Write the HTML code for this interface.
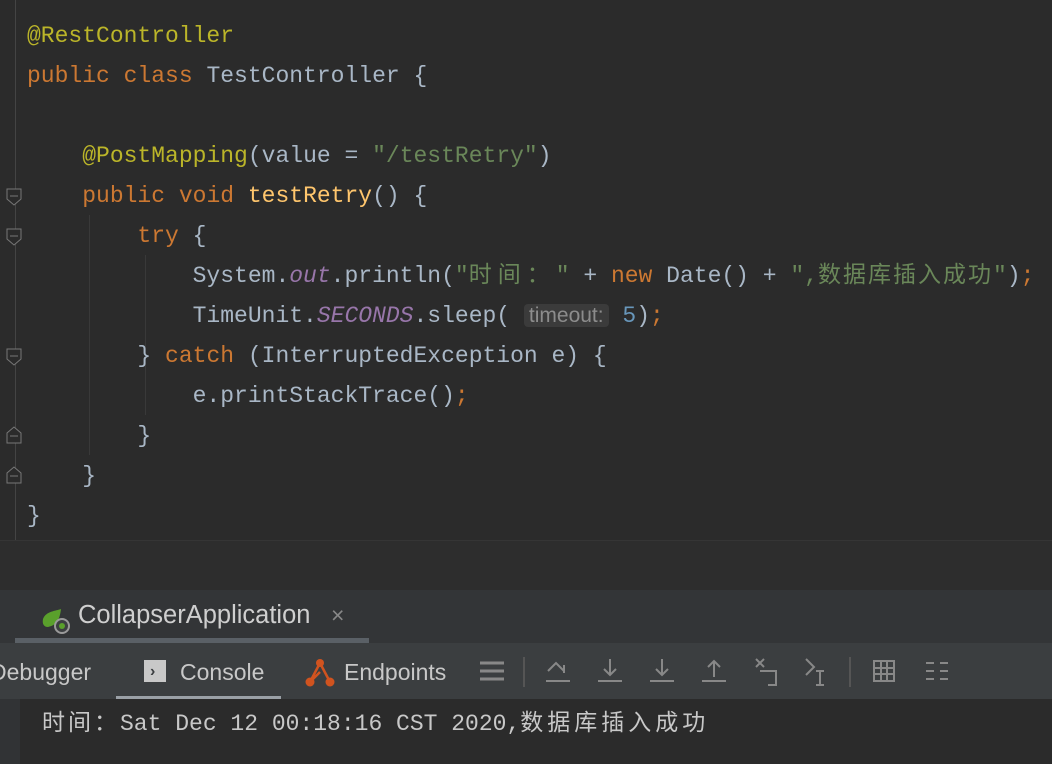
<!DOCTYPE html>
<html><head><meta charset="utf-8"><style>
body{margin:0;width:1052px;height:764px;background:#2b2b2b;overflow:hidden;position:relative;font-family:"Liberation Mono","Noto Sans CJK SC",monospace;}
.ed{position:absolute;left:0;top:0;width:1052px;height:540px;background:#2b2b2b;}
.gl{position:absolute;left:15px;top:0;width:1px;height:540px;background:#444;}
.l{position:absolute;left:27px;font-size:23px;white-space:pre;color:#a9b7c6;line-height:30px;}
.k{color:#cc7832}.a{color:#bbb529}.m{color:#ffc66d}.s{color:#6a8759}.i{color:#9876aa;font-style:italic}.n{color:#6897bb}
.hint{background:#3b3b3b;color:#8c8c8c;font-family:"Liberation Sans",sans-serif;font-size:21px;border-radius:4px;padding:0 5px;}
.ig{position:absolute;width:1px;background:#393939;}
.fold{position:absolute;left:6px;width:16px;height:18px;}
.mid{position:absolute;left:0;top:540px;width:1052px;height:50px;background:#2d2d2d;border-top:1px solid #353535}
.tabs{position:absolute;left:0;top:590px;width:1052px;height:53px;background:#333537;}
.tb{position:absolute;left:0;top:643px;width:1052px;height:56px;background:#3b3e40;}
.ui{font-family:"Liberation Sans",sans-serif;color:#c8c8c8;font-size:23px;position:absolute;white-space:pre}
.out{position:absolute;left:0;top:699px;width:1052px;height:65px;background:#2b2b2b;}
.c1{letter-spacing:6px}.c2{letter-spacing:2px}
</style></head><body>
<div class="ed">
<div class="gl"></div>
<div class="ig" style="left:89px;top:215px;height:240px"></div>
<div class="ig" style="left:145px;top:255px;height:160px"></div>
<svg class="fold" style="top:188px" viewBox="0 0 16 18"><path d="M1 1H15V11L8 17L1 11Z" fill="#2b2b2b" stroke="#777"/><path d="M4 8H12" stroke="#777"/></svg>
<svg class="fold" style="top:228px" viewBox="0 0 16 18"><path d="M1 1H15V11L8 17L1 11Z" fill="#2b2b2b" stroke="#777"/><path d="M4 8H12" stroke="#777"/></svg>
<svg class="fold" style="top:348px" viewBox="0 0 16 18"><path d="M1 1H15V11L8 17L1 11Z" fill="#2b2b2b" stroke="#777"/><path d="M4 8H12" stroke="#777"/></svg>
<svg class="fold" style="top:426px" viewBox="0 0 16 18"><path d="M1 17H15V7L8 1L1 7Z" fill="#2b2b2b" stroke="#777"/><path d="M4 10H12" stroke="#777"/></svg>
<svg class="fold" style="top:466px" viewBox="0 0 16 18"><path d="M1 17H15V7L8 1L1 7Z" fill="#2b2b2b" stroke="#777"/><path d="M4 10H12" stroke="#777"/></svg>
<div class="l a" style="top:21px">@RestController</div>
<div class="l" style="top:61px"><span class="k">public class </span>TestController {</div>
<div class="l" style="top:141px">    <span class="a">@PostMapping</span>(value = <span class="s">"/testRetry"</span>)</div>
<div class="l" style="top:181px">    <span class="k">public void </span><span class="m">testRetry</span>() {</div>
<div class="l" style="top:221px">        <span class="k">try </span>{</div>
<div class="l" style="top:261px">            System.<span class="i">out</span>.println(<span class="s">"<span class="c1">时间：</span>"</span> + <span class="k">new </span>Date() + <span class="s">",<span class="c2">数据库插入成功</span>"</span>)<span class="k">;</span></div>
<div class="l" style="top:301px">            TimeUnit.<span class="i">SECONDS</span>.sleep( <span class="hint">timeout:</span> <span class="n">5</span>)<span class="k">;</span></div>
<div class="l" style="top:341px">        } <span class="k">catch </span>(InterruptedException e) {</div>
<div class="l" style="top:381px">            e.printStackTrace()<span class="k">;</span></div>
<div class="l" style="top:421px">        }</div>
<div class="l" style="top:461px">    }</div>
<div class="l" style="top:501px">}</div>
</div>
<div class="mid"></div>
<div class="tabs">
<svg style="position:absolute;left:40px;top:15px" width="30" height="30" viewBox="0 0 30 30"><path d="M3 14C6 6 16 6 21 4C20 12 18 20 8 22C4 22 2 19 3 14Z" fill="#5aa02c"/><circle cx="22" cy="21" r="7" fill="#3c3f41" stroke="#9a9a9a" stroke-width="2"/><circle cx="22" cy="21" r="3" fill="#5aa02c"/></svg>
<div class="ui" style="left:78px;top:11px;color:#cfcfcf;font-size:25.5px">CollapserApplication</div>
<div class="ui" style="left:331px;top:12px;color:#888">×</div>
<div style="position:absolute;left:15px;top:48px;width:354px;height:5px;background:#5a6066"></div>
</div>
<div class="tb">
<div class="ui" style="left:-10px;top:16px">Debugger</div>
<div style="position:absolute;left:144px;top:17px;width:22px;height:22px;background:#c8c8c8"></div>
<div style="position:absolute;left:150px;top:20px;color:#3b3e40;font:bold 16px 'Liberation Sans'">›</div>
<div class="ui" style="left:180px;top:16px">Console</div>
<div style="position:absolute;left:116px;top:53px;width:165px;height:4px;background:#9aa0a6"></div>
<svg style="position:absolute;left:304px;top:14px" width="32" height="32" viewBox="0 0 32 32"><path d="M16 6L6 25M16 6L26 25M6 25L16 15" stroke="#d0531f" stroke-width="2.5" fill="none"/><circle cx="16" cy="6" r="4" fill="#d0531f"/><circle cx="6" cy="25" r="4.5" fill="#d0531f"/><circle cx="26" cy="25" r="4.5" fill="#d0531f"/></svg>
<div class="ui" style="left:344px;top:16px">Endpoints</div>
<svg style="position:absolute;left:478px;top:14px" width="580" height="30" viewBox="0 0 580 30" fill="none" stroke="#888" stroke-width="2">
<path d="M2 6H26M2 14H26M2 22H26" stroke-width="3"/>
<path d="M46 0V40M372 0V40" stroke="#555"/>
<path d="M68 24H92M70 14L78 6L86 14M86 8V16" />
<path d="M132 2V18M126 12L132 18L138 12M120 24H144"/>
<path d="M184 2V18M178 12L184 18L190 12M172 24H196"/>
<path d="M236 20V4M230 10L236 4L242 10M224 24H248"/>
<path d="M278 2L286 10M286 2L278 10M282 14H298V28H290"/>
<path d="M328 2L336 10L328 18M342 14V28M338 14H346M338 28H346"/>
<rect x="396" y="4" width="20" height="20"/><path d="M396 11H416M396 17H416M403 4V24M409 4V24"/>
<path d="M448 6H456M448 14H456M448 22H456M462 6H470M462 14H470M462 22H470"/>
</svg>
</div>
<div class="out">
<div style="position:absolute;left:0;top:0;width:20px;height:65px;background:#313335"></div>
<div style="position:absolute;left:42px;top:4px;font-size:23px;color:#c8c8c8;white-space:pre;font-family:'Liberation Mono','Noto Sans CJK SC',monospace"><span style="letter-spacing:3px">时间：</span>Sat Dec 12 00:18:16 CST 2020,<span style="letter-spacing:4px">数据库插入成功</span></div>
</div>
</body></html>
